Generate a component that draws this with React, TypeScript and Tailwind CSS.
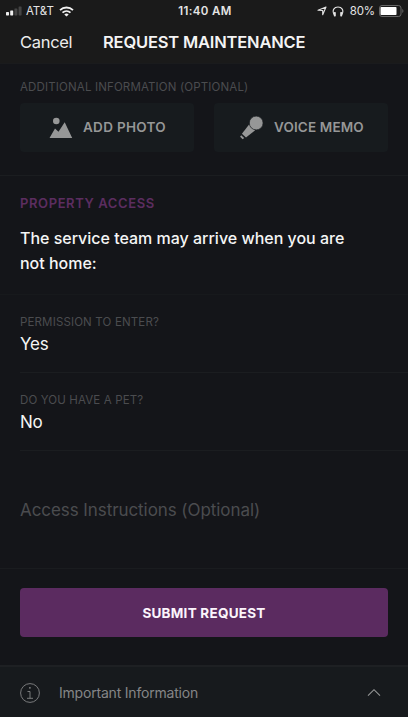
import React from "react";

function StatusBar() {
  return (
    <div className="grid h-[22px] grid-cols-[1fr_auto_1fr] items-center pl-[6px] pr-[4px] text-[11.5px] leading-[22px] text-[#e4e4e4]">
      <div className="flex items-center">
        <svg width="16" height="10" viewBox="0 0 16 10">
          <rect x="0" y="6" width="3" height="3.4" rx=".6" fill="#eee" />
          <rect x="4.2" y="4.5" width="3" height="4.9" rx=".6" fill="#eee" />
          <rect x="8.4" y="2.5" width="3" height="6.9" rx=".6" fill="#444" />
          <rect x="12.6" y=".5" width="3" height="8.9" rx=".6" fill="#444" />
        </svg>
        <span className="ml-[4px] tracking-[-0.1px]">AT&amp;T</span>
        <svg className="ml-[5px]" width="15" height="11" viewBox="0 0 15 11" fill="none" stroke="#f2f2f2" strokeWidth="1.8">
          <path d="M1 4.2C4.7.6 10.3.6 14 4.2" />
          <path d="M3.5 6.7c2.3-2.2 5.7-2.2 8 0" />
          <path d="M7.5 10.5 5.3 8.4c1.3-1.2 3.1-1.2 4.4 0Z" fill="#f2f2f2" stroke="none" />
        </svg>
      </div>
      <span className="font-semibold tracking-[0.35px]">11:40 AM</span>
      <div className="flex items-center justify-end">
        <svg width="10" height="10" viewBox="0 0 10 10" fill="none" stroke="#e4e4e4" strokeWidth="1.1" strokeLinejoin="round">
          <path d="M9 1 5.700 8.800V4.500L1 4.200Z" />
        </svg>
        <svg className="ml-[5px]" width="12" height="11" viewBox="0 0 12 11">
          <path d="M2.200 8.800C-.4 4 2.300 1 6 1s6.400 3 3.800 7.800" fill="none" stroke="#e4e4e4" strokeWidth="1.100" />
          <rect x="1.800" y="6" width="2" height="4.500" rx=".7" fill="#e4e4e4" />
          <rect x="8.200" y="6" width="2" height="4.500" rx=".7" fill="#e4e4e4" />
        </svg>
        <span className="ml-[6px] tracking-[-0.1px]">80%</span>
        <svg className="ml-[4px]" width="25" height="12" viewBox="0 0 25 12">
          <rect x=".5" y=".5" width="21.500" height="11" rx="2.500" fill="none" stroke="#666" />
          <rect x="1.500" y="2" width="16" height="8" rx=".8" fill="#fff" />
          <path d="M23.300 4v4c1.500-.6 1.500-3.400 0-4Z" fill="#666" />
        </svg>
      </div>
    </div>
  );
}

function PhotoIcon() {
  return (
    <svg width="24" height="22" viewBox="0 0 24 22" fill="#969797">
      <circle cx="7.300" cy="4" r="3.300" />
      <path d="M.5 21 6 11.400 9.500 14.800 15.700 5.200 23.200 21Z" />
    </svg>
  );
}

function MicIcon() {
  return (
    <svg width="25" height="24" viewBox="0 0 25 24" fill="#969797">
      <path d="M10.300 8.300 16.200 14.300 7 21.400 2.900 17.700Z" />
      <circle cx="17.200" cy="7" r="6.900" stroke="#171b1e" strokeWidth=".7" />
      <path d="m2.200 19.200 3 2.900-1.600 1.200-2.500-2.500Z" />
    </svg>
  );
}

function Field({ label, value, tracking }: { label: string; value: string; tracking: string }) {
  return (
    <div className="pl-5">
      <div className="h-[78px] border-b border-[#1b1d20] pt-[19px]">
        <div className={`text-[11.5px] leading-4 text-[#4b4c4f] ${tracking}`}>{label}</div>
        <div className="mt-[2px] text-[17px] leading-6 tracking-[-0.2px] text-[#f5f5f5]">{value}</div>
      </div>
    </div>
  );
}

export default function App() {
  return (
    <div className="flex h-[717px] w-[408px] flex-col overflow-hidden bg-[#141519] font-['Inter',sans-serif]">
      <header className="h-[64px] border-b border-[#1a1b1d] bg-[#1a1a1a]">
        <StatusBar />
        <div className="flex h-[40px] items-center px-5">
          <button className="w-[83px] text-left text-[16.5px] leading-6 tracking-[-0.3px] text-[#ededed]">Cancel</button>
          <h1 className="text-[16.5px] font-semibold leading-6 tracking-[-0.18px] text-[#f4f4f4]">REQUEST MAINTENANCE</h1>
        </div>
      </header>

      <section className="h-[112px] border-b border-[#1b1d20] px-5 pt-[15px]">
        <div className="text-[11.5px] leading-4 tracking-[0.15px] text-[#4b4c4f]">ADDITIONAL INFORMATION (OPTIONAL)</div>
        <div className="mt-[8px] grid grid-cols-2 gap-5">
          <button className="flex h-[49px] items-center rounded bg-[#171b1e] pl-[29px] text-[13.5px] font-semibold tracking-[0.3px] text-[#969797]">
            <PhotoIcon />
            <span className="ml-[10px]">ADD PHOTO</span>
          </button>
          <button className="flex h-[49px] items-center rounded bg-[#171b1e] pl-[25px] text-[13.5px] font-semibold tracking-[0.15px] text-[#969797]">
            <MicIcon />
            <span className="ml-[10px]">VOICE MEMO</span>
          </button>
        </div>
      </section>

      <section className="h-[119px] border-b border-[#17191c] px-5 pt-[17px]">
        <h2 className="text-[13px] font-semibold leading-5 tracking-[0.6px] text-[#5c2d60]">PROPERTY ACCESS</h2>
        <p className="mt-[13px] text-[16px] font-medium leading-[25px] tracking-[-0.01px] text-[#f5f5f5]">
          The service team may arrive when you are
          <br />
          not home:
        </p>
      </section>

      <Field label="PERMISSION TO ENTER?" value="Yes" tracking="tracking-[0.15px]" />
      <Field label="DO YOU HAVE A PET?" value="No" tracking="tracking-[0.14px]" />

      <div className="flex h-[118px] items-center border-b border-[#1a1c1f] px-5 pt-px">
        <span className="text-[17px] leading-6 tracking-[-0.07px] text-[#4b4c4f]">Access Instructions (Optional)</span>
      </div>

      <div className="h-[96px] px-5 pt-[19px]">
        <button className="flex h-[49px] w-full items-center justify-center rounded bg-[#5b2b60] pt-px text-[13.5px] font-bold tracking-[0.25px] text-[#fbf5fc]">
          SUBMIT REQUEST
        </button>
      </div>

      <footer className="flex h-[52px] items-center border-t-2 border-[#1e2023] bg-[#171a1d] pl-5 pr-[27px] pt-px">
        <svg width="20" height="20" viewBox="0 0 20 20" fill="none" stroke="#858687" strokeWidth=".9">
          <circle cx="10" cy="10" r="9.400" />
          <path d="M7.500 8.500H10v6.800M7 15.300h6" />
          <circle cx="9.900" cy="4.800" r=".9" fill="#858687" stroke="none" />
        </svg>
        <span className="ml-[19px] flex-1 text-[14px] leading-5 tracking-[-0.2px] text-[#858687]">Important Information</span>
        <svg width="14" height="9" viewBox="0 0 14 9" fill="none" stroke="#969797" strokeWidth="1.100">
          <path d="m1 7.700 6-6 6 6" />
        </svg>
      </footer>
    </div>
  );
}
